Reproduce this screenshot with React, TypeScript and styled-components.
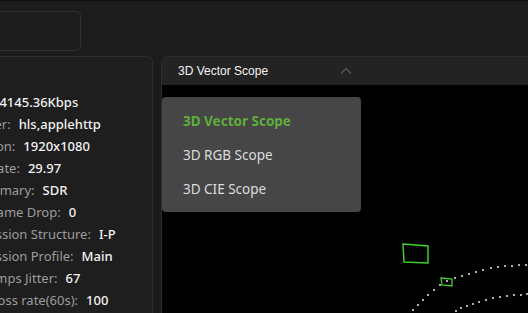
import React from "react";
import styled, { createGlobalStyle } from "styled-components";

const Global = createGlobalStyle`
  html, body { margin: 0; padding: 0; background: #1b1b1b; }
  body { font-family: "Noto Sans", "Open Sans", sans-serif; overflow: hidden; }
`;

const Page = styled.div`
  width: 528px;
  height: 313px;
  display: grid;
  grid-template-rows: 56px 1fr;
  overflow: hidden;
  background: #1b1b1b;
`;

const TopBar = styled.div`
  border-top: 1px solid #0e0e0e;
  background: #1c1c1c;
  display: flex;
  align-items: flex-start;
  padding-top: 10px;
`;

const SearchBox = styled.div`
  width: 90px;
  height: 38px;
  margin-left: -11px;
  border: 1px solid #303030;
  border-radius: 5px;
  background: #1d1d1d;
`;

const Main = styled.div`
  display: flex;
  gap: 8px;
  min-height: 0;
`;

const InfoPanel = styled.div`
  width: 152px;
  flex: none;
  background: #1e1e1e;
  border: 1px solid #2d2d2d;
  border-left: none;
  border-bottom: none;
  border-radius: 0 6px 0 0;
  overflow: hidden;
`;

const InfoList = styled.div`
  display: flex;
  flex-direction: column;
  margin-left: -53px;
  padding-top: 34px;
  font-size: 13px;
`;

const InfoRow = styled.div`
  height: 22px;
  display: flex;
  align-items: center;
  gap: 8px;
  white-space: nowrap;
`;

const Label = styled.span`
  color: #9c9c9c;
`;

const Value = styled.span`
  color: #f2f2f2;
  font-weight: 500;
`;

const ScopePanel = styled.div`
  flex: 1;
  position: relative;
  background: #000;
  border-top: 1px solid #2d2d2d;
  border-left: 1px solid #2d2d2d;
  border-radius: 6px 0 0 0;
  overflow: hidden;
  display: flex;
  flex-direction: column;
`;

const ScopeHeader = styled.div`
  height: 28px;
  flex: none;
  background: #232323;
  display: flex;
  align-items: center;
  padding-left: 16px;
  font-family: "Liberation Sans", Arial, sans-serif;
  font-size: 12px;
  color: #f4f4f4;
`;

const HeaderTitle = styled.span`
  width: 160px;
`;

const Chevron = styled.svg`
  width: 12px;
  height: 8px;
  margin-left: 2px;
`;

const Canvas = styled.svg`
  flex: 1;
  display: block;
`;

const Menu = styled.div`
  position: absolute;
  left: 0;
  top: 40px;
  width: 199px;
  height: 115px;
  box-sizing: border-box;
  padding-top: 7px;
  background: #464646;
  border-radius: 4px;
  display: flex;
  flex-direction: column;
`;

const MenuItem = styled.div<{ $active?: boolean }>`
  height: 34px;
  display: flex;
  align-items: center;
  padding-left: 21px;
  font-size: 13.5px;
  color: ${(p) => (p.$active ? "#5fae3c" : "#dcdcdc")};
  font-weight: ${(p) => (p.$active ? 700 : 400)};
`;

const rows: [string, string][] = [
  ["Bitrate:", "4145.36Kbps"],
  ["Container:", "hls,applehttp"],
  ["Resolution:", "1920x1080"],
  ["Frame Rate:", "29.97"],
  ["Color Primary:", "SDR"],
  ["Video Frame Drop:", "0"],
  ["Compression Structure:", "I-P"],
  ["Compression Profile:", "Main"],
  ["Timestamps Jitter:", "67"],
  ["Packet Loss rate(60s):", "100"],
];

// dot positions in page pixels, shifted into the canvas below
const arc1: [number, number][] = [
  [413, 310], [418, 305], [423, 300], [428, 295], [434, 290], [440, 285],
  [447, 281], [455, 278], [462, 276], [469, 274], [476, 272], [483, 270],
  [491, 268], [498, 267], [505, 266], [512, 266], [519, 265], [526, 265],
];
const arc2: [number, number][] = [
  [456, 311], [461, 308], [467, 306], [473, 304], [479, 302], [486, 300],
  [493, 298], [500, 297], [507, 296], [514, 295], [521, 295], [527, 294],
];

export default function App() {
  const ox = 162;
  const oy = 85;
  return (
    <>
      <Global />
      <Page>
        <TopBar>
          <SearchBox />
        </TopBar>
        <Main>
          <InfoPanel>
            <InfoList>
              {rows.map(([l, v]) => (
                <InfoRow key={l}>
                  <Label>{l}</Label>
                  <Value>{v}</Value>
                </InfoRow>
              ))}
            </InfoList>
          </InfoPanel>
          <ScopePanel>
            <ScopeHeader>
              <HeaderTitle>3D Vector Scope</HeaderTitle>
              <Chevron viewBox="0 0 12 8">
                <path d="M1 6.5 L6 1.5 L11 6.5" fill="none" stroke="#555" strokeWidth="1.4" />
              </Chevron>
            </ScopeHeader>
            <Canvas>
              <polygon
                points={`${403 - ox},${244 - oy} ${428 - ox},${246 - oy} ${428 - ox},${263 - oy} ${404 - ox},${262 - oy}`}
                fill="none"
                stroke="#3ecf2a"
                strokeWidth="1.5"
              />
              <polygon
                points={`${441 - ox},${278 - oy} ${452 - ox},${279 - oy} ${452 - ox},${286 - oy} ${442 - ox},${285 - oy}`}
                fill="none"
                stroke="#3ecf2a"
                strokeWidth="1.3"
              />
              {[...arc1, ...arc2].map(([x, y], i) => (
                <circle key={i} cx={x - ox} cy={y - oy} r="1" fill="#e8e8e8" />
              ))}
            </Canvas>
            <Menu>
              <MenuItem $active>3D Vector Scope</MenuItem>
              <MenuItem>3D RGB Scope</MenuItem>
              <MenuItem>3D CIE Scope</MenuItem>
            </Menu>
          </ScopePanel>
        </Main>
      </Page>
    </>
  );
}
